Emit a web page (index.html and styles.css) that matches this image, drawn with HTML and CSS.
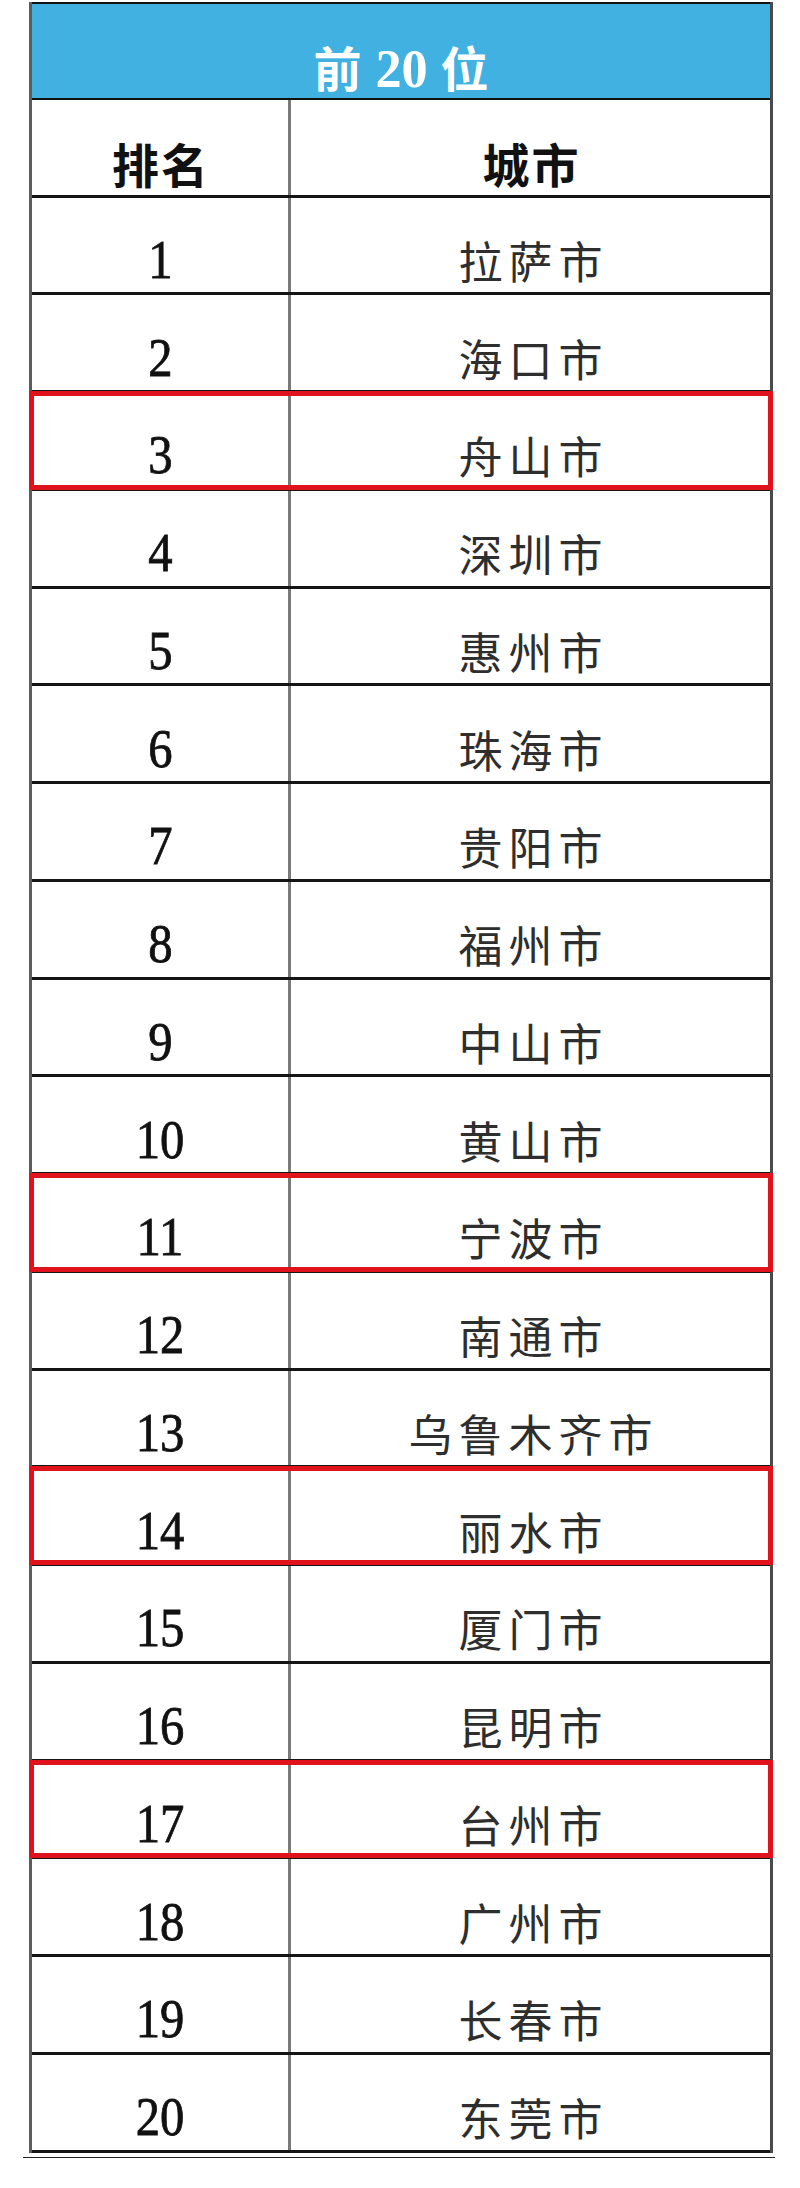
FILE: index.html
```html
<!DOCTYPE html>
<html lang="zh-CN">
<head>
<meta charset="utf-8">
<title>前20位</title>
<link rel="stylesheet" href="styles.css">
</head>
<body>
<div class="sheet">
  <div class="title"><span class="title-text">前 <span class="title-num">20</span> 位</span></div>
  <div class="row head">
    <div class="cell rank"><span class="head-text">排名</span></div>
    <div class="cell city"><span class="head-text">城市</span></div>
  </div>
  <div class="row"><div class="cell rank"><span class="num">1</span></div><div class="cell city"><span class="name">拉萨市</span></div></div>
  <div class="row"><div class="cell rank"><span class="num">2</span></div><div class="cell city"><span class="name">海口市</span></div></div>
  <div class="row marked"><div class="cell rank"><span class="num">3</span></div><div class="cell city"><span class="name">舟山市</span></div></div>
  <div class="row"><div class="cell rank"><span class="num">4</span></div><div class="cell city"><span class="name">深圳市</span></div></div>
  <div class="row"><div class="cell rank"><span class="num">5</span></div><div class="cell city"><span class="name">惠州市</span></div></div>
  <div class="row"><div class="cell rank"><span class="num">6</span></div><div class="cell city"><span class="name">珠海市</span></div></div>
  <div class="row"><div class="cell rank"><span class="num">7</span></div><div class="cell city"><span class="name">贵阳市</span></div></div>
  <div class="row"><div class="cell rank"><span class="num">8</span></div><div class="cell city"><span class="name">福州市</span></div></div>
  <div class="row"><div class="cell rank"><span class="num">9</span></div><div class="cell city"><span class="name">中山市</span></div></div>
  <div class="row"><div class="cell rank"><span class="num">10</span></div><div class="cell city"><span class="name">黄山市</span></div></div>
  <div class="row marked"><div class="cell rank"><span class="num">11</span></div><div class="cell city"><span class="name">宁波市</span></div></div>
  <div class="row"><div class="cell rank"><span class="num">12</span></div><div class="cell city"><span class="name">南通市</span></div></div>
  <div class="row"><div class="cell rank"><span class="num">13</span></div><div class="cell city"><span class="name">乌鲁木齐市</span></div></div>
  <div class="row marked"><div class="cell rank"><span class="num">14</span></div><div class="cell city"><span class="name">丽水市</span></div></div>
  <div class="row"><div class="cell rank"><span class="num">15</span></div><div class="cell city"><span class="name">厦门市</span></div></div>
  <div class="row"><div class="cell rank"><span class="num">16</span></div><div class="cell city"><span class="name">昆明市</span></div></div>
  <div class="row marked"><div class="cell rank"><span class="num">17</span></div><div class="cell city"><span class="name">台州市</span></div></div>
  <div class="row"><div class="cell rank"><span class="num">18</span></div><div class="cell city"><span class="name">广州市</span></div></div>
  <div class="row"><div class="cell rank"><span class="num">19</span></div><div class="cell city"><span class="name">长春市</span></div></div>
  <div class="row"><div class="cell rank"><span class="num">20</span></div><div class="cell city"><span class="name">东莞市</span></div></div>
</div>
<div class="underline"></div>
</body>
</html>
```

FILE: styles.css
```css
* {
  box-sizing: border-box;
}

body {
  margin: 0;
  background: #ffffff;
  font-family: "Noto Sans CJK SC", sans-serif;
}

.sheet {
  width: 744px;
  margin: 2px 0 0 29px;
  border-left: 3px solid #5c5c5c;
  border-right: 3px solid #4a4a4a;
}

.title {
  height: 98px;
  background: #41b1e1;
  border-top: 2px solid #111;
  border-bottom: 2px solid #111;
  display: flex;
  justify-content: center;
  align-items: center;
  padding-top: 34px;
}

.title-text {
  color: #ffffff;
  font-family: "Liberation Serif", "Noto Sans CJK SC", serif;
  font-weight: 700;
  font-size: 48px;
  line-height: 1;
  white-space: pre;
}

.title-num {
  font-size: 55px;
  display: inline-block;
  transform: scaleX(0.95);
}

.row {
  position: relative;
  display: grid;
  grid-template-columns: 259px 1fr;
  height: 97.75px;
  border-bottom: 3px solid #151515;
}

.row.head {
  height: 97.5px;
}

.cell {
  display: flex;
  justify-content: center;
  align-items: center;
  padding-top: 30px;
}

.rank {
  border-right: 3px solid #7a7a7a;
}

.head-text {
  font-family: "Noto Sans CJK SC", sans-serif;
  font-weight: 700;
  font-size: 47px;
  line-height: 1;
  letter-spacing: 2px;
  padding-left: 2px;
  color: #111;
}

.num {
  display: inline-block;
  font-family: "Liberation Serif", serif;
  font-size: 54px;
  line-height: 1;
  color: #111;
  -webkit-text-stroke: 0.8px #111;
  transform: scaleX(0.9);
}

.name {
  font-family: "Noto Sans CJK SC", sans-serif;
  font-weight: 400;
  font-size: 44px;
  line-height: 1;
  letter-spacing: 6px;
  padding-left: 6px;
  color: #2e2e2e;
}

.row.marked::after {
  content: "";
  position: absolute;
  top: -2px;
  bottom: -2px;
  left: -3px;
  right: -3px;
  border: 5px solid #e0121c;
  z-index: 1;
  pointer-events: none;
}

.underline {
  width: 752px;
  margin: 4px 0 0 23px;
  border-top: 1px solid #222;
}
```
